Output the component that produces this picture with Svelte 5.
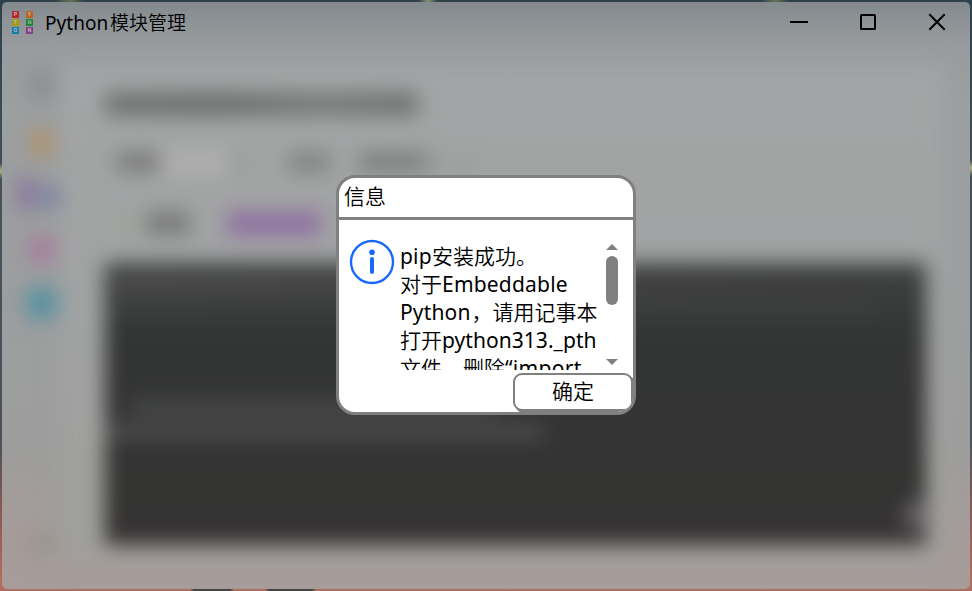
<script>
  const logo = [
    { c: '#b8232f', t: 'P' }, { c: '#bd6424', t: 'Y' },
    { c: '#a29b12', t: 'T' }, { c: '#1f8638', t: 'H' },
    { c: '#137fae', t: 'O' }, { c: '#843d87', t: 'N' },
  ];
</script>

<div class="desktop">
  <div class="window">
    <header class="titlebar">
      <div class="logo">
        {#each logo as b}<span style="background:{b.c}">{b.t}</span>{/each}
      </div>
      <h1><span class="py">Python</span>模块管理</h1>
      <div class="controls">
        <svg width="20" height="20" viewBox="0 0 20 20"><path d="M1 10H19" /></svg>
        <svg width="20" height="20" viewBox="0 0 20 20"><rect x="3" y="3" width="14" height="14" rx="0.6" /></svg>
        <svg width="20" height="20" viewBox="0 0 20 20"><path d="M2.3 2.3 17.7 17.7M17.7 2.3 2.3 17.7" /></svg>
      </div>
    </header>

    <div class="body">
      <nav class="rail">
        <i class="home"></i>
        <i class="orange"></i>
        <div class="active"><b></b><i class="indigo"></i></div>
        <i class="pink"></i>
        <i class="cyan"></i>
        <i class="gear"></i>
      </nav>
      <main class="page">
        <div class="heading"></div>
        <div class="row options">
          <i class="w1"></i><i class="field"></i><i class="tick"></i><i class="w2"></i><i class="w3"></i><i class="tick"></i><i class="tick"></i>
        </div>
        <div class="row actions"><i class="ok"></i><i class="label"></i><i class="link"></i></div>
        <div class="console">
          <i class="l1"></i><i class="l2"></i><i class="l3"></i><i class="l4"></i><i class="spot"></i>
        </div>
      </main>
    </div>
  </div>

  <section class="dialog">
    <header class="caption">信息</header>
    <div class="content">
      <svg class="info" width="46" height="46" viewBox="0 0 46 46">
        <circle cx="23" cy="23" r="21" fill="none" stroke="#1a69ff" stroke-width="2.4" />
        <circle cx="23" cy="13.2" r="2.8" fill="#1a69ff" />
        <path d="M23 20V33" stroke="#1a69ff" stroke-width="4" stroke-linecap="round" />
      </svg>
      <div class="message">
        <div><span class="pip">pip</span>安装成功。</div>
        <div>对于<span class="emb">Embeddable</span></div>
        <div><span class="pyt">Python</span>，请用记事本</div>
        <div>打开<span class="pth">python313._pth</span></div>
        <div>文件，删除<span class="imp">“import</span></div>
      </div>
      <div class="scroll">
        <svg width="12" height="6" viewBox="0 0 12 6"><path d="M0 6 6 0 12 6Z" /></svg>
        <div class="track"><div class="thumb"></div></div>
        <svg width="12" height="6" viewBox="0 0 12 6"><path d="M0 0H12L6 6Z" /></svg>
      </div>
    </div>
    <footer><button>确定</button></footer>
  </section>
</div>

<style>
  .desktop {
    box-sizing: border-box; width: 972px; height: 591px; padding: 2px; position: relative; overflow: hidden;
    font-family: "Noto Sans", "Noto Sans CJK SC", sans-serif; color: #000;
    background:
      radial-gradient(circle at 0 171px, #b2b87d 0, #b2b87d00 8px),
      radial-gradient(circle at 971px 168px, #b2b87d 0, #b2b87d00 8px),
      radial-gradient(ellipse at 70px 0, #6a7356 0, #6a735600 14px),
      radial-gradient(ellipse at 428px 0, #8a9070 0, #8a907000 10px),
      radial-gradient(ellipse at 775px 0, #6a7356 0, #6a735600 14px),
      linear-gradient(90deg, transparent 190px, #454443 194px, #454443 230px, transparent 234px, transparent 265px, #454443 269px, #454443 312px, transparent 316px) 0 100% / 972px 3px no-repeat,
      linear-gradient(#2e414b 0, #47525a 200px, #4b525b 440px, #8f5a56 520px, #b5695b 575px, #b06c5e 591px);
  }
  .window {
    width: 968px; height: 587px; border-radius: 5px; overflow: hidden; display: flex; flex-direction: column;
    background: linear-gradient(#828a8d 0, #8f9497 22px, #999c9e 48px, #9c9fa0 100px, #9c9e9f 300px, #9d9d9c 450px, #a59c9a 530px, #a69d9b 100%);
  }
  .titlebar { height: 40px; margin-bottom: 2px; flex: none; display: flex; align-items: center; padding-left: 10px; position: relative; z-index: 1; }
  .logo { display: grid; grid-template-columns: 7px 7px; gap: 1px 7px; width: 21px; margin-top: 1px; }
  .logo span { width: 7px; height: 7px; font: bold 5px/7px "Liberation Sans", sans-serif; color: #bdbdbd; text-align: center; }
  h1 { margin: 1px 0 0 12px; font-size: 19px; line-height: 28px; font-weight: 350; white-space: nowrap; display: flex; }
  h1 .py { width: 65px; letter-spacing: 0.05px; font-weight: 400; }
  .controls { margin-left: auto; display: flex; gap: 49px; padding-right: 23px; }
  .controls svg { fill: none; stroke: #000; stroke-width: 2; display: block; }
  .body { flex: 1; min-height: 0; display: flex; filter: blur(10px); }
  i, b { display: block; flex: none; }
  .rail { width: 58px; flex: none; display: flex; flex-direction: column; align-items: center; padding: 28px 0 0 22px; box-sizing: border-box; }
  .rail > i { border-radius: 8px; }
  .home { width: 26px; height: 28px; background: #8b8e90; }
  .orange { width: 20px; height: 26px; background: #b38f62; margin-top: 30px; }
  .active { display: flex; align-items: center; gap: 6px; margin: 21px 0 0 -5px; }
  .active b { width: 10px; height: 32px; background: #82609e; }
  .indigo { width: 24px; height: 20px; background: #7c7fa2; margin-top: 8px; }
  .pink { width: 26px; height: 26px; background: #a87b9c; margin-top: 27px; }
  .cyan { width: 32px; height: 32px; background: #5892a0; margin-top: 25px; }
  .gear { width: 26px; height: 26px; background: #999490; margin-top: 211px; }
  .page { flex: none; width: 884px; box-sizing: border-box; height: 503px; margin-top: 20px; padding: 28px 0 0 45px; border-radius: 10px; background: linear-gradient(#a2a4a5, #a1a3a3 45%, #9fa09c 95%, #a59c9a); }
  .heading { width: 312px; height: 24px; background: linear-gradient(90deg, #727474, #6c6e6e 35%, #797b7b 70%, #6f7171); }
  .row { display: flex; align-items: center; }
  .options { height: 34px; margin-top: 29px; padding-left: 12px; }
  .w1 { width: 43px; height: 20px; background: #7b7b7b; }
  .field { width: 68px; height: 30px; background: #adadad; }
  .tick { width: 8px; height: 9px; margin: 0 10px 0 8px; background: #858787; }
  .w2 { width: 42px; height: 20px; margin: 0 29px 0 34px; background: #828484; }
  .w3 { width: 68px; height: 20px; background: #7e8080; }
  .actions { height: 28px; margin-top: 30px; padding-left: 15px; }
  .ok { width: 16px; height: 16px; background: #98a492; }
  .label { width: 42px; height: 22px; margin-left: 11px; background: #777877; }
  .link { width: 94px; height: 25px; margin-left: 38px; background: #9072a2; }
  .console { display: flex; flex-direction: column; width: 821px; height: 282px; margin-top: 26px; background: linear-gradient(#424343, #3a3b3b 30px, #333434 75px, #333332 230px, #363333); }
  .l1 { width: 740px; height: 14px; margin: 16px 0 0 12px; background: linear-gradient(90deg, #505050, #444 60%, #3c3c3c); }
  .l2 { width: 775px; height: 4px; margin-top: 15px; background: #4b4d4d; }
  .l3 { width: 365px; height: 16px; margin: 88px 0 0 25px; background: #484949; }
  .l4 { width: 438px; height: 14px; margin-top: 9px; background: #4f4f4e; }
  .spot { width: 18px; height: 26px; margin: 63px 0 0 800px; background: #6c636d; }

  .dialog {
    position: absolute; left: 336px; top: 175px; width: 300px; height: 240px; box-sizing: border-box;
    border: 3px solid #808080; border-radius: 19px; background: #fff; overflow: hidden;
    display: flex; flex-direction: column; font-size: 21px; font-weight: 350;
  }
  .caption { height: 39px; box-sizing: border-box; padding-left: 5px; line-height: 36px; flex: none; }
  .content { border-top: 3px solid #808080; height: 153px; box-sizing: border-box; display: flex; flex: none; padding: 18px 15px 0 10px; }
  .info { display: block; flex: none; margin-top: 1px; }
  .message { width: 198px; height: 128px; overflow: hidden; margin: 4px 8px 0 5px; }
  .message div { height: 28px; line-height: 28px; white-space: nowrap; display: flex; }
  .message span { flex: none; font-weight: 400; }
  .pip { width: 32px; letter-spacing: 0.2px; }
  .emb { letter-spacing: 0.2px; }
  .pyt { width: 71.5px; letter-spacing: 0.15px; }
  .pth { letter-spacing: 0.05px; }
  .imp { letter-spacing: 0.3px; }
  .scroll { width: 12px; height: 121px; margin-top: 6px; display: flex; flex-direction: column; }
  .scroll svg { display: block; fill: #808080; flex: none; }
  .track { flex: 1; padding-top: 6px; }
  .thumb { height: 49px; border-radius: 6px; background: #808080; }
  footer { display: flex; justify-content: flex-end; padding-top: 3px; }
  button { box-sizing: border-box; width: 120px; height: 38px; border: 2px solid #808080; border-radius: 9px; background: #fff; box-shadow: 2px 2px 0 #808080; padding: 0 0 1px; font: inherit; line-height: 33px; color: #000; }
</style>
